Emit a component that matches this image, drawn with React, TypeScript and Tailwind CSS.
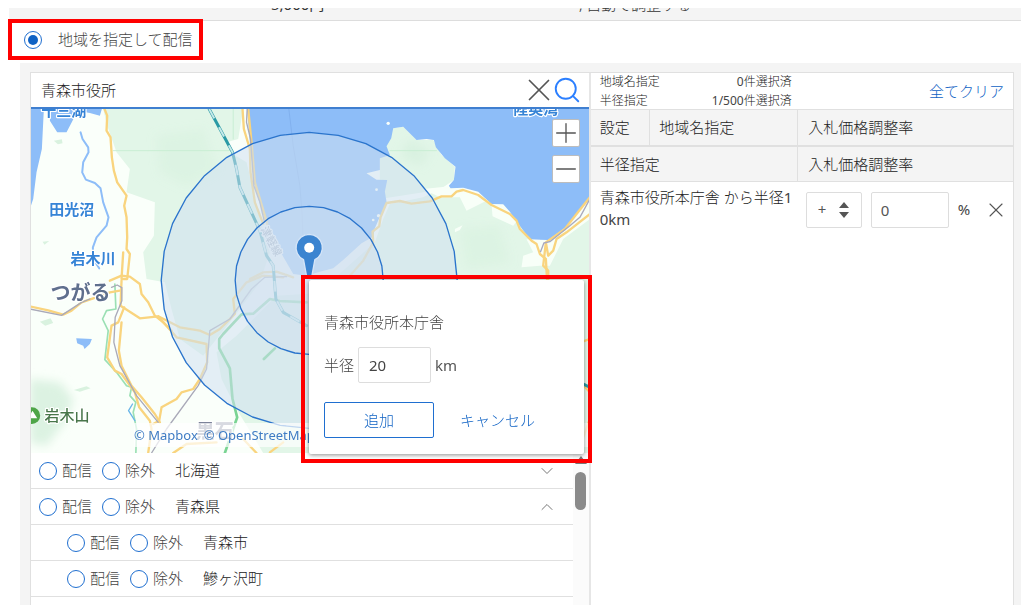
import clsx from "clsx";
import { ChevronDown, ChevronUp, Minus, Plus, Search, X } from "lucide-react";
import type { ReactNode } from "react";

type Area = { id: string; name: string; nested?: boolean; open?: boolean };

const areas: Area[] = [
  { id: "hokkaido", name: "北海道", open: false },
  { id: "aomori", name: "青森県", open: true },
  { id: "aomori-shi", name: "青森市", nested: true },
  { id: "ajigasawa", name: "鰺ヶ沢町", nested: true },
];

// map units are a third of a pixel
const center = { x: 838, y: 514 };

function ring(radius: number) {
  return Array.from({ length: 32 }, (_, i) => {
    const a = (i * Math.PI) / 16;
    return `${Math.round(center.x + radius * Math.sin(a))},${Math.round(center.y - radius * Math.cos(a))}`;
  }).join(" ");
}

function MapDrawing() {
  return (
    <svg
      viewBox="0 0 1680 1032"
      preserveAspectRatio="xMidYMid slice"
      className="absolute inset-0 size-full"
      fill="none"
      strokeLinejoin="round"
      strokeLinecap="round"
      aria-label="青森市周辺の地図"
    >
      <defs>
        <filter id="soft" x="-30%" y="-30%" width="160%" height="160%">
          <feGaussianBlur stdDeviation="14" />
        </filter>
      </defs>
      <rect width="1680" height="1032" fill="#fafffa" />

      {/* forests */}
      <g fill="#e2f6e8">
        <path d="M220 0H640L625 90L590 100L600 130L650 160L690 330L720 430L690 520L600 640L520 740L450 690L425 600L405 520L350 510L340 430L372 380L375 280L290 250L300 180L260 130L232 50Z" />
        <path d="M1072 100L1090 58L1120 53L1160 93L1210 93L1235 138L1275 173L1272 213L1240 235L1180 265L1080 285L1060 330L1035 400L990 440L900 520H1680V320L1600 370L1560 400L1500 391L1460 333L1385 290L1300 240L1257 238L1050 270V150Z" />
        <path d="M560 730L620 680L740 560L1680 500V1032H700L620 900L575 810Z" />
      </g>
      <g fill="#d4efdc" filter="url(#soft)">
        <path d="M0 810L90 820L130 870L110 930L50 1010L0 1000Z" opacity=".8" />
        <path d="M380 80L520 60L560 180L470 230L390 190Z" opacity=".4" />
        <path d="M1290 360L1410 350L1440 460L1310 480Z" opacity=".4" />
        <path d="M1140 90L1200 130L1170 170L1110 140Z" opacity=".6" />
      </g>
      <path d="M72 95L96 91L98 103L84 106ZM30 638L62 628L70 642L46 650ZM132 843L170 832L182 838L150 848ZM38 398L58 396L44 407Z" fill="#d9f2df" />
      <g fill="#f8fff8">
        <path d="M1180 240L1260 232L1340 250L1370 275L1310 305L1290 265L1230 265Z" />
        <path d="M1385 286L1420 286L1462 335L1450 350L1388 322Z" />
        <path d="M1490 391L1560 393L1610 360L1680 285V330L1600 390L1560 470L1530 470L1475 475L1480 440L1510 430Z" />
        <path d="M1275 360L1298 349L1290 363L1275 370Z" />
      </g>

      {/* sea and lakes */}
      <g fill="#8dbdf8">
        <path d="M0 0H42L36 120L20 190L10 270L0 300Z" />
        <path d="M62 10L60 35L82 70L110 70L128 35L142 5L180 12L210 20L216 0H62Z" />
        <path d="M652 0L660 103L675 233L705 333L760 443L790 495L830 500L870 488L910 478L940 453L995 403L1030 383L1035 358L1050 323L1070 278L1065 248L1072 213L1040 212L1010 193L1050 183L1050 148L1080 138L1070 112L1084 88L1090 58L1120 53L1160 93L1190 90L1212 93L1218 115L1245 148L1277 173L1272 213L1257 230L1262 238L1300 236L1345 248L1385 285L1420 286L1440 308L1462 340L1500 391L1555 393L1610 353L1680 263V0Z" />
        <path d="M139 688L186 690L180 705L164 720L160 710L142 703Z" />
      </g>
      <g fill="#fafffa">
        <circle cx="1075" cy="43" r="5" />
        <circle cx="1040" cy="242" r="4" />
        <circle cx="1030" cy="333" r="4" />
        <circle cx="1046" cy="320" r="5" />
      </g>
      <path d="M152 70L158 90L175 115L176 130L160 160L157 190L168 212L195 222L212 238L220 280L236 325L230 350L200 385L189 415L190 450L208 478" stroke="#8dbdf8" strokeWidth="6" />
      <path d="M777 0L790 110L810 230L817 320L819 380" stroke="#7aa9e8" strokeWidth="3" opacity=".6" />
      <path d="M250 125H600M1080 125H1220M610 0V90" stroke="#c9eed4" strokeWidth="3" />

      {/* minor river */}
      <path d="M255 525L258 600L230 605L218 630L235 665L225 752L260 790L290 830L305 835L300 860L318 880L310 910L320 960L318 1032" stroke="#9be0b4" strokeWidth="5" />
      <path d="M308 885L296 905L315 935" stroke="#6ab6e8" strokeWidth="4" />

      {/* main roads */}
      <g stroke="#f9d47e" strokeWidth="7">
        <path d="M224 0L232 20L230 65L242 85L246 145L252 185L262 220L290 260L283 290L290 325L292 385L290 420L300 435L292 510L275 510L280 430" />
        <path d="M240 515L275 500L300 503L330 525L335 555L355 580L375 620L400 640L425 665" />
        <path d="M0 592L55 604L100 617L125 605L155 580L190 568L240 550L270 545" />
        <path d="M275 515L272 590L330 628L385 622L450 655L510 665L540 678L570 660L600 630L615 615L610 570L650 520L700 500L760 505" />
        <path d="M385 622L440 685L530 705L532 760L510 810L490 840L455 850L440 870L395 895L388 935L370 945" />
        <path d="M283 595L265 640L245 650L232 745L255 785L275 795L315 850L328 895L360 935L365 960L355 1032" />
        <path d="M275 640L267 725L275 770L305 830L335 865L375 915L390 940" />
        <path d="M638 0L642 60L660 120L662 190L675 280L700 345" />
        <path d="M655 0L665 100L675 220L705 320L712 345" />
        <path d="M960 500L1000 455L1030 400L1028 368L1048 352L1052 325L1070 282L1110 276L1145 284L1200 277L1235 262L1265 262L1280 248L1300 243L1345 258L1385 288L1440 315L1460 335L1470 360L1505 395L1520 405L1530 435L1548 450L1552 520" />
        <path d="M1548 400L1540 470L1555 485V520M1680 315L1610 370L1580 390L1570 425L1555 440L1548 400L1605 360L1640 315L1680 265" />
        <path d="M660 510L700 490L740 488L790 505M1652 820L1680 850M1652 700L1680 690M1655 1000L1680 930M430 1032L470 1005L560 1000M640 990L680 1032M720 1030L760 1000" />
      </g>
      <path d="M1680 270L1650 325L1620 350L1560 398L1542 402L1532 428" stroke="#a9a9bd" strokeWidth="4" />
      <path d="M0 600L95 619L155 580L180 570M245 535L262 528L276 536V575L256 625L252 700L270 770L320 860L385 940M365 1032L410 960L505 830L530 780L540 665L600 630L665 540L705 505L770 503M652 0L650 40L662 90L672 230L690 280L704 340" stroke="#a9a9b8" strokeWidth="4" />

      {/* expressway */}
      <path d="M830 580L750 576L720 570L670 614L635 616L580 675L568 690V718L600 778L608 870L622 925L615 945L585 1032M735 718L702 750" stroke="#7ad493" strokeWidth="8" />

      {/* bullet train line */}
      <path d="M538 0L608 130L620 180L630 235L690 365L710 440L730 470L738 570L760 610L830 650" stroke="#2a9aa5" strokeWidth="9" />
      <path d="M538 0L608 130L620 180L630 235L690 365L710 440L730 470L738 570L760 610L830 650" stroke="#c5e8e8" strokeWidth="6" strokeDasharray="32 30" strokeLinecap="butt" />
      <path d="M1650 820L1680 835" stroke="#2a9aa5" strokeWidth="9" />

      {/* place names */}
      <g
        fontFamily="'Noto Sans CJK JP', sans-serif"
        fontSize="45"
        fontWeight="700"
        fill="#3684d6"
        stroke="#fff"
        strokeWidth="7"
        paintOrder="stroke"
      >
        <text x="34" y="22">十三湖</text>
        <text x="58" y="318">田光沼</text>
        <text x="122" y="465">岩木川</text>
        <text x="1450" y="14">陸奥湾</text>
        <text x="62" y="574" fontSize="60" fill="#5f6f8d">つがる</text>
        <text x="44" y="936" fontWeight="500" fill="#48764a">岩木山</text>
        <text x="498" y="988" fontSize="57" fill="#7c8399">黒石</text>
        <text x="692" y="360" fontSize="32" fontWeight="500" fill="#8b95a8" transform="rotate(62 692 360)">津軽線</text>
      </g>
      <circle cx="6" cy="920" r="25" fill="#4ea548" />
      <path d="M-6 928L8 905L22 928Z" fill="#fff" />

      {/* delivery radius */}
      <g fill="#d0e0f0" fillOpacity=".55" stroke="#2a74cc" strokeWidth="4">
        <polygon points={ring(444)} />
        <polygon points={ring(222)} fillOpacity=".5" />
      </g>
      <path d="M838 376a40 40 0 0 1 17 76L844 512H832L821 452a40 40 0 0 1 17-76Z" fill="#3b84d0" stroke="#d5e5f8" strokeWidth="4" />
      <circle cx="838" cy="416" r="15" fill="#fff" />
    </svg>
  );
}

function MapButton({ label, children }: { label: string; children: ReactNode }) {
  return (
    <button
      aria-label={label}
      className="flex size-7 items-center justify-center rounded-xs border border-[#bdbdbd] bg-white text-[#555]"
    >
      {children}
    </button>
  );
}

function RadiusDialog() {
  return (
    <div className="absolute top-[166px] left-[270px] z-10 border-4 border-[#f00] pt-px pr-1 pb-[5px] pl-1">
      <form className="w-[275px] rounded-xs bg-white px-[15px] pt-[31px] pb-4 shadow-[0_1px_4px_rgba(0,0,0,0.45)]">
        <p className="leading-[22px]">青森市役所本庁舎</p>
        <div className="mt-[14px] flex items-center gap-1">
          <label htmlFor="radius">半径</label>
          <input
            id="radius"
            defaultValue="20"
            className="h-9 w-[73px] rounded-xs border border-[#ddd] px-[10px] font-normal text-[#444]"
          />
          <span className="font-normal text-[#555]">km</span>
        </div>
        <div className="mt-[19px] flex text-[#0f62c4]">
          <button type="button" className="h-9 w-[110px] rounded-xs border border-[#1f6fd0]">
            追加
          </button>
          <button type="button" className="ml-[26px] h-9">
            キャンセル
          </button>
        </div>
      </form>
    </div>
  );
}

const radioClass =
  "size-[18px] appearance-none rounded-full border border-[#1f6fd0] bg-white bg-clip-content p-[3px] checked:bg-[#0f62c4]";

function AreaRow({ area }: { area: Area }) {
  return (
    <li
      className={clsx(
        "flex h-9 shrink-0 items-center border-b border-[#e0e0e0] pr-4",
        area.nested ? "pl-9" : "pl-2",
      )}
    >
      {["配信", "除外"].map((option) => (
        <label key={option} className="mr-[10px] flex items-center gap-[5px]">
          <input type="radio" name={area.id} className={radioClass} />
          {option}
        </label>
      ))}
      <span className="ml-[10px] flex-1 text-[#222]">{area.name}</span>
      {area.open !== undefined && (
        <button aria-label={`${area.name}を開閉`} className="text-[#777]">
          {area.open ? <ChevronUp size={20} strokeWidth={1.2} /> : <ChevronDown size={20} strokeWidth={1.2} />}
        </button>
      )}
    </li>
  );
}

function MapPanel() {
  return (
    <section className="flex min-h-0 min-w-0 flex-col border-r-2 border-[#e6e6e6]">
      <div className="flex h-9 shrink-0 items-center border-b-2 border-[#3f7fd0] pr-[7px] pl-[10px]">
        <input
          aria-label="地域を検索"
          defaultValue="青森市役所"
          className="min-w-0 flex-1 text-[#222] outline-none"
        />
        <button aria-label="クリア" className="-mr-[6px] text-[#555]">
          <X size={38} strokeWidth={1.1} />
        </button>
        <button aria-label="検索" className="text-[#2b7fff]">
          <Search size={30} strokeWidth={1.5} />
        </button>
      </div>

      <div className="relative h-[344px] shrink-0">
        <div className="absolute inset-0 overflow-hidden">
          <MapDrawing />
          <div className="absolute right-0 bottom-[6px] left-[103px] flex gap-[6px] bg-white/70 leading-6 font-normal whitespace-nowrap text-[13px] text-[#3f7cc4]">
            <a href="#mapbox">© Mapbox</a>
            <a href="#osm">© OpenStreetMap</a>
          </div>
          <div className="absolute top-[10px] right-[9px] flex flex-col gap-2">
            <MapButton label="拡大">
              <Plus size={32} strokeWidth={1} className="shrink-0" />
            </MapButton>
            <MapButton label="縮小">
              <Minus size={32} strokeWidth={1} className="shrink-0" />
            </MapButton>
          </div>
        </div>
        <RadiusDialog />
      </div>

      <div className="flex min-h-0 flex-1 overflow-hidden">
        <ul className="flex min-w-0 flex-1 flex-col">
          {areas.map((area) => (
            <AreaRow key={area.id} area={area} />
          ))}
        </ul>
        <div className="flex w-4 flex-col items-center gap-2 bg-[#fbfbfb] pt-[3px]">
          <svg viewBox="0 0 12 8" className="h-2 w-3" fill="#777">
            <path d="M6 0L12 8H0Z" />
          </svg>
          <div className="h-[38px] w-[11px] rounded-full bg-[#8a8a8a]" />
        </div>
      </div>
    </section>
  );
}

function SelectedPanel() {
  return (
    <section className="min-w-0 text-[#222]">
      <div className="flex h-9 items-center justify-between pr-[9px] pl-[9px]">
        <dl className="grid w-[192px] grid-cols-[auto_1fr] text-[12px] leading-[19px]">
          <dt>地域名指定</dt>
          <dd className="text-right">
            <span className="font-normal text-[#444]">0</span>件選択済
          </dd>
          <dt>半径指定</dt>
          <dd className="text-right">
            <span className="font-normal text-[#444]">1/500</span>件選択済
          </dd>
        </dl>
        <button className="text-[#0f62c4]">全てクリア</button>
      </div>

      <table className="w-full table-fixed border-t border-b-2 border-[#e0e0e0] bg-[#f4f4f4] text-left">
        <thead>
          <tr className="h-9">
            <th className="w-[14%] border-r border-[#e0e0e0] pl-[9px] font-light">設定</th>
            <th className="w-[35%] border-r border-[#e0e0e0] pl-[9px] font-light">地域名指定</th>
            <th className="pl-[10px] font-light">入札価格調整率</th>
          </tr>
        </thead>
      </table>

      <table className="w-full table-fixed text-left">
        <thead className="border-b border-[#e0e0e0] bg-[#f4f4f4]">
          <tr className="h-[35px]">
            <th className="w-[49%] border-r border-[#e0e0e0] pl-[9px] font-light">半径指定</th>
            <th className="pl-[10px] font-light">入札価格調整率</th>
          </tr>
        </thead>
        <tbody>
          <tr>
            <td className="pt-1 pr-1 pl-[9px] leading-[22px] break-all">
              青森市役所本庁舎 から半径<span className="font-normal text-[#444]">10km</span>
            </td>
            <td className="pt-[7px] pl-2">
              <div className="flex items-center">
                <div className="relative">
                  <select
                    aria-label="増減"
                    className="h-9 w-14 appearance-none rounded-xs border border-[#ddd] bg-white pl-[11px] font-normal text-[#555]"
                  >
                    <option>+</option>
                    <option>-</option>
                  </select>
                  <svg
                    viewBox="0 0 10 16"
                    className="pointer-events-none absolute top-[10px] right-[13px] h-4 w-[10px]"
                    fill="#555"
                  >
                    <path d="M5 0L10 6H0ZM5 16L0 10H10Z" />
                  </svg>
                </div>
                <input
                  aria-label="調整率"
                  defaultValue="0"
                  className="ml-[9px] h-9 w-[78px] rounded-xs border border-[#ddd] px-[9px] font-normal text-[#555]"
                />
                <span className="ml-[9px] font-normal text-[#444]">%</span>
                <button aria-label="削除" className="ml-[14px] text-[#555]">
                  <X size={24} strokeWidth={1.1} />
                </button>
              </div>
            </td>
          </tr>
        </tbody>
      </table>
    </section>
  );
}

export default function App() {
  return (
    <main className="flex h-screen flex-col bg-white pt-2 pr-[3px] pb-[10px] pl-2 font-['Noto_Sans','Noto_Sans_CJK_JP',sans-serif] text-[15px] font-light text-[#444]">
      <div className="ml-px flex h-[13px] shrink-0 items-end overflow-hidden border-b border-[#ddd] bg-[#f4f4f4] pl-[262px] leading-4 text-[#333]">
        <span className="w-[308px] pb-2 font-normal">5,000円</span>
        <span className="pb-2">, 自動で調整する</span>
      </div>

      <label className="relative -mt-0.5 flex h-[41px] w-[195px] shrink-0 items-center gap-4 border-4 border-[#f00] pl-3">
        <input type="radio" name="area-mode" defaultChecked className={radioClass} />
        地域を指定して配信
      </label>

      <div className="mt-[3px] ml-3 flex min-h-0 flex-1 bg-[#f4f4f4] pt-[9px] pr-[7px] pl-[10px]">
        <div className="grid min-w-0 flex-1 grid-cols-[57fr_43fr] border border-b-0 border-[#e0e0e0] bg-white">
          <MapPanel />
          <SelectedPanel />
        </div>
      </div>
    </main>
  );
}
